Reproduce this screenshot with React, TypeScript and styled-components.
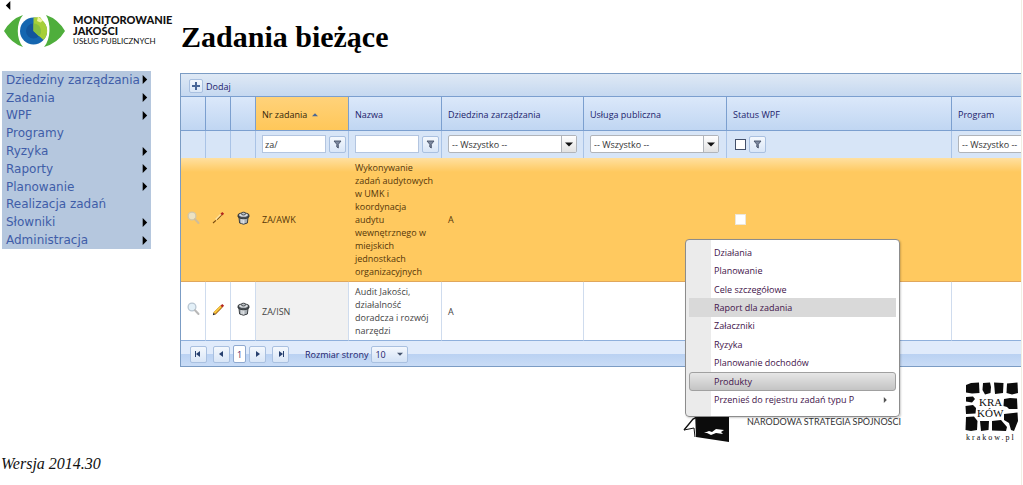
import React from 'react';
import styled, { createGlobalStyle, css } from 'styled-components';

const uiFont = '"Open Sans", "Noto Sans", sans-serif';

const GlobalStyle = createGlobalStyle`
  *, *::before, *::after { box-sizing: border-box; }
  body { margin: 0; background: #fff; overflow-x: hidden; }
  ul { margin: 0; padding: 0; list-style: none; }
  button, input, select { font: inherit; color: inherit; margin: 0; }
`;

const Page = styled.div`
  min-height: 100vh;
  margin-right: 1px;
  border-right: 1px solid #f1eee2;
  overflow: hidden;
`;
const Columns = styled.div`
  display: grid;
  grid-template-columns: 180px minmax(0, 1fr);
`;
const Side = styled.aside`
  display: flex;
  flex-direction: column;
`;
const CollapseButton = styled.button`
  display: flex;
  width: 16px;
  height: 14px;
  padding: 1px 0 0 4px;
  border: 0;
  background: none;
`;
const Brand = styled.div`
  display: flex;
  gap: 7px;
  height: 57px;
  padding-left: 4px;
`;
const BrandName = styled.div`
  font-family: "Lato", sans-serif;
  color: #111;
  font-size: 11px;
  line-height: 11px;
  font-weight: 900;
  white-space: nowrap;
  small {
    display: block;
    font-size: 8px;
    font-weight: 400;
  }
`;
const SideMenu = styled.ul`
  display: grid;
  grid-auto-rows: 1fr;
  width: 149px;
  height: 178px;
  margin-left: 2px;
  background: #b5c7de;
`;
const SideLink = styled.a`
  display: flex;
  align-items: center;
  justify-content: space-between;
  height: 100%;
  padding: 0 4px;
  font: 12px "DejaVu Sans", sans-serif;
  color: #3f5da8;
  text-decoration: none;
  white-space: nowrap;
`;
const Main = styled.main`
  position: relative;
`;
const Title = styled.h1`
  margin: 0;
  padding: 19px 0 18px 1px;
  font: bold 30px/36px "Liberation Serif", serif;
  color: #000;
`;
const Panel = styled.section`
  overflow: hidden;
  border: solid #7b9cc4;
  border-width: 1px 0 1px 1px;
  font: 9px/13px ${uiFont};
  color: #333;
`;
const Toolbar = styled.div`
  display: flex;
  align-items: center;
  height: 23px;
  padding: 2px 0 0 8px;
  background: linear-gradient(#dfe9f5, #c5d8f0);
  border-bottom: 1px solid #7b9fcf;
`;
const AddButton = styled.button`
  display: flex;
  align-items: center;
  gap: 3px;
  padding: 0;
  border: 0;
  background: none;
  color: #1c1c6b;
`;
const iconBox = css`
  display: grid;
  place-items: center;
  flex: none;
  border: 1px solid #a9c0e0;
  border-radius: 2px;
  background: linear-gradient(#f4f8fd, #d9e6f7);
`;
const PlusBox = styled.span`
  ${iconBox}
  width: 14px;
  height: 14px;
`;
const IconButton = styled.button`
  ${iconBox}
  width: 17px;
  height: 17px;
  padding: 0;
`;
const Table = styled.table`
  width: 100%;
  min-width: 940px;
  table-layout: fixed;
  border-collapse: separate;
  border-spacing: 0;
`;
const HeadCell = styled.th<{ $sorted?: boolean }>`
  height: 34px;
  padding: 2px 6px 0;
  text-align: left;
  font-weight: 400;
  color: #1c1c6b;
  border-right: 1px solid #7b9fcf;
  border-bottom: 1px solid #7b9fcf;
  background: ${(p) => (p.$sorted ? 'linear-gradient(#ffd27a, #ffc759)' : 'linear-gradient(#dbe8fa, #c0d6f2)')};
`;
const SortLabel = styled.span`
  display: flex;
  align-items: center;
  gap: 5px;
  color: #33260a;
`;
const FilterCell = styled.td`
  height: 27px;
  padding: 0 2px 1px 6px;
  border-right: 1px solid #a9c3e6;
  background: #d7e5f7;
`;
const FilterRow = styled.div`
  display: flex;
  align-items: center;
  gap: 3px;
`;
const FilterInput = styled.input`
  flex: 1;
  min-width: 0;
  height: 18px;
  padding: 0 2px;
  border: 1px solid #b3c5e0;
  background: #fff;
  outline: 0;
`;
const Combo = styled.label<{ $width: number; $compact?: boolean }>`
  display: grid;
  grid-template-columns: 1fr 15px;
  align-items: center;
  width: ${(p) => p.$width}px;
  height: ${(p) => (p.$compact ? 17 : 18)}px;
  border: 1px solid ${(p) => (p.$compact ? '#a9c0e0' : '#b0b4ba')};
  border-radius: 2px;
  background: ${(p) => (p.$compact ? 'linear-gradient(#f4f8fd, #d3e2f6)' : '#fff')};
`;
const ComboSelect = styled.select`
  grid-area: 1 / 1 / 2 / 3;
  width: 100%;
  height: 100%;
  padding: 0 3px;
  border: 0;
  appearance: none;
  background: none;
  outline: 0;
`;
const ComboArrow = styled.span<{ $compact?: boolean }>`
  grid-area: 1 / 2;
  display: grid;
  place-items: center;
  height: 100%;
  pointer-events: none;
  ${(p) => !p.$compact && css`
    border-left: 1px solid #b0b4ba;
    background: linear-gradient(#fff, #e2e2e2);
  `}
`;
const Check = styled.input<{ $plain?: boolean }>`
  appearance: none;
  display: block;
  width: 11px;
  height: 11px;
  background: #fff;
  border: 1px solid ${(p) => (p.$plain ? '#ece6da' : '#43506a')};
  margin-left: 2px;
`;
const Row = styled.tr<{ $selected?: boolean }>`
  background: ${(p) => (p.$selected ? 'linear-gradient(#ffe0a0, #ffc95f 14px)' : '#fff')};
  color: ${(p) => (p.$selected ? '#55370a' : '#444')};
`;
const Cell = styled.td<{ $selected?: boolean; $icon?: boolean; $sorted?: boolean }>`
  padding: ${(p) => (p.$icon ? '0' : '3px 6px')};
  text-align: ${(p) => (p.$icon ? 'center' : 'left')};
  border-right: 1px solid ${(p) => (p.$selected ? 'transparent' : '#cfdcee')};
  border-bottom: 1px solid ${(p) => (p.$selected ? '#e0a75c' : '#8fb0dc')};
  ${(p) => p.$sorted && !p.$selected && 'background: #f1f1f1;'}
`;
const RowAction = styled.button`
  display: grid;
  place-items: center;
  width: 100%;
  padding: 0 0 4px 1px;
  border: 0;
  background: none;
`;
const Pager = styled.nav`
  display: flex;
  align-items: center;
  gap: 6px;
  height: 25px;
  padding: 1px 0 0 9px;
  background: linear-gradient(#e0ebfb 0 50%, #b9d1f2 50%, #c9dcf6);
`;
const PageGroup = styled.div`
  display: flex;
  align-items: center;
  gap: 3px;
`;
const PageNumber = styled.button`
  width: 13px;
  height: 18px;
  padding: 0;
  border: 1px solid #8fa9d0;
  border-radius: 2px;
  background: #fff;
  color: #5a1b5e;
`;
const PageSize = styled.div`
  display: flex;
  align-items: center;
  gap: 3px;
  margin-left: 10px;
  color: #1c1c6b;
`;
const Popup = styled.ul`
  position: absolute;
  top: 239px;
  left: 505px;
  display: grid;
  grid-auto-rows: 1fr;
  width: 215px;
  height: 178px;
  padding: 3px 3px 7px;
  border: 1px solid #8c8c8c;
  border-radius: 4px;
  background: linear-gradient(90deg, #ebebeb 25px, #fff 25px);
  box-shadow: 1px 1px 2px rgba(0, 0, 0, 0.2);
`;
const PopupItem = styled.button<{ $state?: 'focused' | 'pressed' }>`
  display: flex;
  align-items: center;
  justify-content: space-between;
  width: 100%;
  height: 100%;
  padding: 0 7px 0 24px;
  border: 1px solid transparent;
  border-radius: 3px;
  background: none;
  font: 9px/13px ${uiFont};
  color: #42134a;
  text-align: left;
  ${(p) => p.$state === 'focused' && 'background: #d9d9d9; border-radius: 0;'}
  ${(p) => p.$state === 'pressed' && 'background: linear-gradient(#e6e6e6, #c4c4c4); border-color: #a0a0a0;'}
`;
const Footer = styled.footer`
  display: flex;
  align-items: flex-start;
  justify-content: space-between;
  padding: 14px 2px 0 503px;
`;
const Strategy = styled.div`
  display: flex;
  align-items: center;
  gap: 17px;
  padding-top: 20px;
  font: 9px/12px "Lato", sans-serif;
  color: #333;
  white-space: nowrap;
`;
const Version = styled.p`
  margin: 0;
  padding: 13px 0 0 1px;
  font: italic 16px/18px "Liberation Serif", serif;
  color: #111;
`;

const Triangle = ({ dir, size = 9, color = '#000' }: { dir: 'left' | 'right' | 'down' | 'up'; size?: number; color?: string }) => {
  const shapes = { left: '7,0 2,5 7,10', right: '3,0 8,5 3,10', down: '0,3 10,3 5,8', up: '0,7 10,7 5,2' };
  return (
    <svg width={size} height={size} viewBox="0 0 10 10" fill={color} aria-hidden>
      <polygon points={shapes[dir]} />
    </svg>
  );
};

const EyeLogo = () => (
  <svg width="62" height="34" viewBox="0 0 62 34" aria-hidden>
    <path d="M0 17Q7 5 19 1C12 9 12 25 19 33Q7 29 0 17Z" fill="#4fae3c" />
    <path d="M61 17Q54 5 42 1C47 9 47 25 40 33Q54 29 61 17Z" fill="#4fae3c" />
    <circle cx="29.5" cy="17" r="13.5" fill="#1566b0" />
    <circle cx="29.5" cy="17" r="7.5" fill="#12559c" />
    <path d="M29.5 17V3.5L36 3L39 7A13.5 13.5 0 0 1 39.5 26Z" fill="#a6cf38" />
    <path d="M29.5 17V9.5A7.5 7.5 0 0 1 34.8 22.3Z" fill="#86bf3f" />
    <path d="M34 2.5L39 6.5L36.5 8.5L33 7Z" fill="#eef3a0" />
  </svg>
);

const Funnel = () => (
  <svg width="9" height="9" viewBox="0 0 9 9" aria-hidden>
    <path d="M1 1H8L5.3 4.3V8L3.8 7V4.3Z" fill="#7e8aa0" stroke="#47526a" strokeWidth="0.9" />
  </svg>
);

const Magnifier = ({ faded }: { faded?: boolean }) => (
  <svg width="13" height="14" viewBox="0 0 13 14" opacity={faded ? 0.65 : 1} aria-hidden>
    <circle cx="5" cy="5" r="3.9" fill="#e3f0f8" stroke="#b9c6d2" strokeWidth="1.3" />
    <path d="M8 8.2L11.5 12" stroke="#b8b8b8" strokeWidth="2" strokeLinecap="round" />
  </svg>
);

const Pencil = ({ thin }: { thin?: boolean }) => (
  <svg width="13" height="13" viewBox="0 0 13 13" aria-hidden>
    {thin ? (
      <>
        <path d="M1 12L4 9.4M5 8.6L9.5 4" stroke="#7a4d12" strokeWidth="1.2" />
        <path d="M3.6 8.4L8.6 3.4" stroke="#ffe3a3" strokeWidth="1.4" />
      </>
    ) : (
      <>
        <path d="M2.4 10.6L9.5 3.5" stroke="#a8620f" strokeWidth="3" />
        <path d="M2.4 10L9.2 3.2" stroke="#f8c93f" strokeWidth="2" />
        <path d="M0.8 12.2L1.4 9.8L3.2 11.6Z" fill="#222" />
      </>
    )}
    <path d="M9.4 3.7L11.2 1.9" stroke="#b3261e" strokeWidth="2.6" />
  </svg>
);

const Bin = () => (
  <svg width="13" height="14" viewBox="0 0 13 14" aria-hidden>
    <path d="M2 6.5L2.6 12Q6.5 14.4 10.4 12L11 6.5Z" fill="#a9afb5" stroke="#3a3e42" />
    <path d="M5 8v4.4M6.8 8v4.6" stroke="#f2f4f5" />
    <path d="M1 4.2Q1 2 6.5 2T12 4.2V6Q10.5 7.8 6.5 7.8T1 6Z" fill="#4a4f54" stroke="#26292c" strokeWidth="0.8" />
    <ellipse cx="6.5" cy="4" rx="4.4" ry="1.8" fill="#d7dbde" />
    <ellipse cx="6.5" cy="2.6" rx="2.2" ry="1.4" fill="#b6bbc0" stroke="#2e3236" strokeWidth="0.8" />
  </svg>
);

const StrategyMark = () => (
  <svg width="47" height="41" viewBox="0 0 47 41" aria-hidden>
    <path d="M12 10L46 8V41L13 36Z" fill="#0c0c0c" />
    <path d="M1 29L10 18L14 16V29" fill="none" stroke="#111" strokeWidth="1.4" />
    <path d="M1 29L11 27L12 36" fill="none" stroke="#111" strokeWidth="1" />
    <path d="M21 32l5-2 3 1 4-3 8 1-3 2 2 2-7-1-5 2-4-2Z" fill="#fff" />
  </svg>
);

const KrakowLogo = () => (
  <svg width="54" height="61" viewBox="0 0 54 61" role="img" aria-label="Kraków">
    <g fill="#0c0c0c">
      <path d="M1 4L6 2L14 1.5L14.5 12L7 12.5L1 11.5Z" />
      <path d="M18 2L25 1.5L26 6L25.5 12L20 13.5L17.5 9Z" />
      <path d="M29 1.5L38.5 2L38 12L30 13Z" />
      <path d="M42 2.5L52.5 1.5L53 12L47 13.5L41.5 12Z" />
      <path d="M1 16L8 15.5L10 18L7 21.5L1 20.5Z" />
      <path d="M0.5 25L8 24L11 27L10.5 32.5L1 33Z" />
      <path d="M39 18L45 17L52 17.5L52.5 28L44 28L42 26L38.5 25Z" />
      <path d="M1 36L9 35.5L12.5 40L12 49L6 50L0.5 49Z" />
      <path d="M15 40L24 40L23.5 49L16 50Z" />
      <path d="M27 40L36 39L42 46L41 50L27 49.5Z" />
      <path d="M39 33L52.5 31.5L53 40L49 50L46 49L44 42L39 39Z" />
    </g>
    <g fill="#0c0c0c" fontFamily="'Liberation Serif', serif">
      <text x="14" y="25" fontSize="11">KRA</text>
      <text x="12" y="36" fontSize="11">KÓW</text>
      <text x="1" y="59" fontSize="8" letterSpacing="2">krakow.pl</text>
    </g>
  </svg>
);

const sections = [
  { name: 'Dziedziny zarządzania', nested: true },
  { name: 'Zadania', nested: true },
  { name: 'WPF', nested: true },
  { name: 'Programy', nested: false },
  { name: 'Ryzyka', nested: true },
  { name: 'Raporty', nested: true },
  { name: 'Planowanie', nested: true },
  { name: 'Realizacja zadań', nested: false },
  { name: 'Słowniki', nested: true },
  { name: 'Administracja', nested: true },
];

const rows = [
  {
    code: 'ZA/AWK',
    name: 'Wykonywanie zadań audytowych w UMK i koordynacja audytu wewnętrznego w miejskich jednostkach organizacyjnych',
    area: 'A',
    selected: true,
  },
  { code: 'ZA/ISN', name: 'Audit Jakości, działalność doradcza i rozwój narzędzi', area: 'A', selected: false },
];

const popupItems: { name: string; state?: 'focused' | 'pressed'; nested?: boolean }[] = [
  { name: 'Działania' },
  { name: 'Planowanie' },
  { name: 'Cele szczegółowe' },
  { name: 'Raport dla zadania', state: 'focused' },
  { name: 'Załaczniki' },
  { name: 'Ryzyka' },
  { name: 'Planowanie dochodów' },
  { name: 'Produkty', state: 'pressed' },
  { name: 'Przenieś do rejestru zadań typu P', nested: true },
];

const Dropdown = ({ label, value, width, compact }: { label: string; value: string; width: number; compact?: boolean }) => (
  <Combo $width={width} $compact={compact}>
    <ComboSelect aria-label={label}>
      <option>{value}</option>
    </ComboSelect>
    <ComboArrow $compact={compact}>
      <Triangle dir="down" size={compact ? 6 : 8} color={compact ? '#44546e' : '#111'} />
    </ComboArrow>
  </Combo>
);

const FilterButton = ({ column }: { column: string }) => (
  <IconButton aria-label={`Filtruj: ${column}`}>
    <Funnel />
  </IconButton>
);

const PageArrow = ({ dir, end, label }: { dir: 'left' | 'right'; end?: boolean; label: string }) => (
  <IconButton aria-label={label}>
    <svg width="9" height="8" viewBox="0 0 9 8" fill="#27406f" aria-hidden>
      <polygon points={dir === 'left' ? '6,1 6,7 2,4' : '3,1 3,7 7,4'} />
      {end && <rect x={dir === 'left' ? 1 : 7} y="1" width="1" height="6" />}
    </svg>
  </IconButton>
);

export default function App() {
  return (
    <Page>
      <GlobalStyle />
      <Columns>
        <Side>
          <CollapseButton aria-label="Zwiń menu">
            <Triangle dir="left" />
          </CollapseButton>
          <Brand>
            <EyeLogo />
            <BrandName>
              MONITOROWANIE
              <br />
              JAKOŚCI
              <small>USŁUG PUBLICZNYCH</small>
            </BrandName>
          </Brand>
          <SideMenu>
            {sections.map((s) => (
              <li key={s.name}>
                <SideLink href="#">
                  {s.name}
                  {s.nested && <Triangle dir="right" />}
                </SideLink>
              </li>
            ))}
          </SideMenu>
        </Side>
        <Main>
          <Title>Zadania bieżące</Title>
          <Panel>
            <Toolbar>
              <AddButton>
                <PlusBox>
                  <svg width="8" height="8" viewBox="0 0 8 8" aria-hidden>
                    <path d="M4 0v8M0 4h8" stroke="#4a6797" strokeWidth="2" />
                  </svg>
                </PlusBox>
                Dodaj
              </AddButton>
            </Toolbar>
            <Table>
              <colgroup>
                {[25, 25, 25, 93, 93, 142, 143, 225].map((w, i) => (
                  <col key={i} width={w} />
                ))}
                <col />
              </colgroup>
              <thead>
                <tr>
                  <HeadCell />
                  <HeadCell />
                  <HeadCell />
                  <HeadCell $sorted>
                    <SortLabel>
                      Nr zadania <Triangle dir="up" size={6} color="#4a6796" />
                    </SortLabel>
                  </HeadCell>
                  <HeadCell>Nazwa</HeadCell>
                  <HeadCell>Dziedzina zarządzania</HeadCell>
                  <HeadCell>Usługa publiczna</HeadCell>
                  <HeadCell>Status WPF</HeadCell>
                  <HeadCell>Program</HeadCell>
                </tr>
                <tr>
                  <FilterCell />
                  <FilterCell />
                  <FilterCell />
                  <FilterCell>
                    <FilterRow>
                      <FilterInput aria-label="Nr zadania" defaultValue="za/" />
                      <FilterButton column="Nr zadania" />
                    </FilterRow>
                  </FilterCell>
                  <FilterCell>
                    <FilterRow>
                      <FilterInput aria-label="Nazwa" />
                      <FilterButton column="Nazwa" />
                    </FilterRow>
                  </FilterCell>
                  <FilterCell>
                    <Dropdown label="Dziedzina zarządzania" value="-- Wszystko --" width={129} />
                  </FilterCell>
                  <FilterCell>
                    <Dropdown label="Usługa publiczna" value="-- Wszystko --" width={129} />
                  </FilterCell>
                  <FilterCell>
                    <FilterRow>
                      <Check type="checkbox" aria-label="Status WPF" />
                      <FilterButton column="Status WPF" />
                    </FilterRow>
                  </FilterCell>
                  <FilterCell>
                    <Dropdown label="Program" value="-- Wszystko --" width={129} />
                  </FilterCell>
                </tr>
              </thead>
              <tbody>
                {rows.map((r) => (
                  <Row key={r.code} $selected={r.selected}>
                    <Cell $icon $selected={r.selected}>
                      <RowAction aria-label="Podgląd">
                        <Magnifier faded={r.selected} />
                      </RowAction>
                    </Cell>
                    <Cell $icon $selected={r.selected}>
                      <RowAction aria-label="Edytuj">
                        <Pencil thin={r.selected} />
                      </RowAction>
                    </Cell>
                    <Cell $icon $selected={r.selected}>
                      <RowAction aria-label="Usuń">
                        <Bin />
                      </RowAction>
                    </Cell>
                    <Cell $sorted $selected={r.selected}>{r.code}</Cell>
                    <Cell $selected={r.selected}>{r.name}</Cell>
                    <Cell $selected={r.selected}>{r.area}</Cell>
                    <Cell $selected={r.selected} />
                    <Cell $selected={r.selected}>
                      <Check $plain type="checkbox" aria-label={`Status WPF ${r.code}`} />
                    </Cell>
                    <Cell $selected={r.selected} />
                  </Row>
                ))}
              </tbody>
            </Table>
            <Pager aria-label="Strony">
              <PageArrow dir="left" end label="Pierwsza" />
              <PageGroup>
                <PageArrow dir="left" label="Poprzednia" />
                <PageNumber>1</PageNumber>
                <PageArrow dir="right" label="Następna" />
              </PageGroup>
              <PageArrow dir="right" end label="Ostatnia" />
              <PageSize>
                Rozmiar strony
                <Dropdown compact label="Rozmiar strony" value="10" width={37} />
              </PageSize>
            </Pager>
          </Panel>
          <Footer>
            <Strategy>
              <StrategyMark />
              NARODOWA STRATEGIA SPÓJNOŚCI
            </Strategy>
            <KrakowLogo />
          </Footer>
          <Popup>
            {popupItems.map((item) => (
              <li key={item.name}>
                <PopupItem $state={item.state}>
                  {item.name}
                  {item.nested && <Triangle dir="right" size={6} color="#555" />}
                </PopupItem>
              </li>
            ))}
          </Popup>
        </Main>
      </Columns>
      <Version>Wersja 2014.30</Version>
    </Page>
  );
}
